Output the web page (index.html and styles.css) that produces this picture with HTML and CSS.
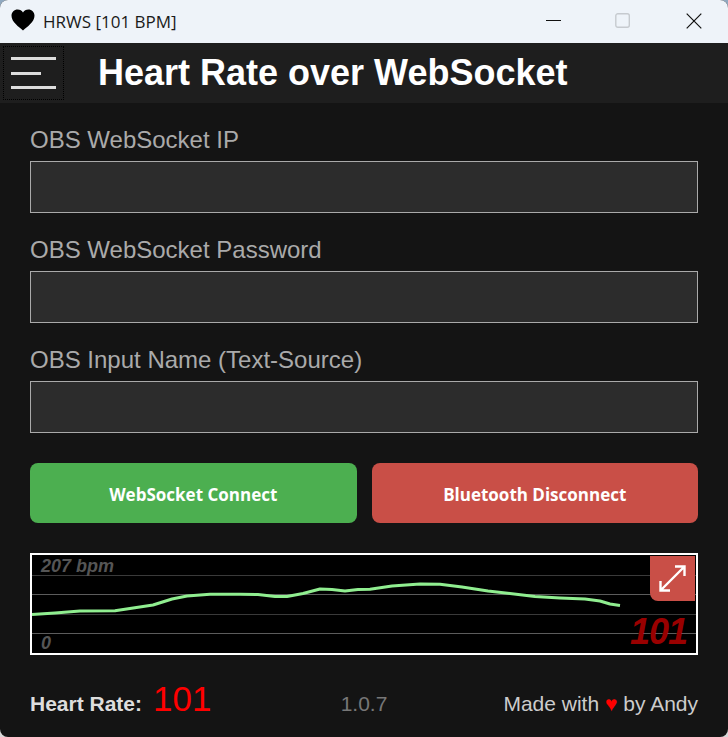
FILE: index.html
```html
<!DOCTYPE html>
<html lang="en">
<head>
  <meta charset="UTF-8" />
  <title>HRWS [101 BPM]</title>
  <link rel="stylesheet" href="styles.css">
</head>
<body>
  <div class="window">
    <!-- Title bar -->
    <div class="titlebar">
      <svg class="app-icon" width="24" height="22" viewBox="0 0 24 22">
        <path d="M12 21.5 C8 18 0.5 13 0.5 6.8 C0.5 3 3.3 0.5 6.6 0.5 C9 0.5 11 1.8 12 3.6 C13 1.8 15 0.5 17.4 0.5 C20.7 0.5 23.5 3 23.5 6.8 C23.5 13 16 18 12 21.5 Z" fill="#000"/>
      </svg>
      <span class="title-text">HRWS [101 BPM]</span>
      <div class="win-controls">
        <svg class="win-btn" width="16" height="16" viewBox="0 0 16 16"><path d="M2 7.5 H17" stroke="#111" stroke-width="1"/></svg>
        <svg class="win-btn" width="16" height="16" viewBox="0 0 16 16"><rect x="0.8" y="0.8" width="13.5" height="13.5" rx="2" fill="none" stroke="#c6cacf" stroke-width="1.4"/></svg>
        <svg class="win-btn" width="16" height="16" viewBox="0 0 16 16"><path d="M0.7 0.7 L15.3 15.3 M15.3 0.7 L0.7 15.3" stroke="#111" stroke-width="1.2"/></svg>
      </div>
    </div>

    <!-- App header -->
    <div class="header">
      <div class="menu-btn">
        <span class="bar"></span>
        <span class="bar bar-short"></span>
        <span class="bar"></span>
      </div>
      <h1>Heart Rate over WebSocket</h1>
    </div>

    <div class="content">
      <div class="field">
        <label>OBS WebSocket IP</label>
        <input type="text">
      </div>
      <div class="field">
        <label>OBS WebSocket Password</label>
        <input type="text">
      </div>
      <div class="field">
        <label>OBS Input Name (Text-Source)</label>
        <input type="text">
      </div>

      <div class="buttons">
        <button class="btn-green">WebSocket Connect</button>
        <button class="btn-red">Bluetooth Disconnect</button>
      </div>

      <!-- Heart rate graph -->
      <div class="graph">
        <svg class="graph-svg" width="664" height="98" viewBox="32 555 664 98">
          <path d="M32 575.5 H696 M32 614.5 H696" stroke="#3a3a3a" stroke-width="1"/>
          <path d="M32 594.5 H696 M32 633.5 H696" stroke="#5c5c5c" stroke-width="1"/>
          <path d="M32 614.5 L55 613 L80 611 L115 610.7 L153 605 L172 599 L187 596 L210 594.3 L240 594.2 L258 594.5 L275 596.5 L287 596.5 L303 593.5 L320 589 L332 589.5 L345 591 L358 589.5 L370 589.3 L392 586 L420 584 L440 584.3 L462 587 L488 591 L510 593.5 L535 596.5 L560 598 L585 599 L600 601 L610 604 L620 605.5" fill="none" stroke="#90ee90" stroke-width="3" stroke-linejoin="round"/>
        </svg>
        <span class="graph-max">207 bpm</span>
        <span class="graph-min">0</span>
        <span class="graph-now">101</span>
        <div class="expand-btn">
          <svg width="29" height="29" viewBox="0 0 29 29">
            <path d="M2.5 26.5 L26.5 2.5 M17 2.5 H26.5 V12 M2.5 17 V26.5 H12" fill="none" stroke="#fff" stroke-width="2.4"/>
          </svg>
        </div>
      </div>

      <div class="footer">
        <div class="rate"><b>Heart Rate:</b><span class="rate-value">101</span></div>
        <div class="version">1.0.7</div>
        <div class="credit">Made with <span class="love">♥</span> by Andy</div>
      </div>
    </div>
  </div>
</body>
</html>
```

FILE: styles.css
```css
/* Global */
html, body {
  margin: 0;
  padding: 0;
  height: 100%;
  background: linear-gradient(#8fa8c0, #8fa8c0 50%, #d8d8d8 50%);
  overflow: hidden;
}
body {
  font-family: 'Liberation Sans', Arial, sans-serif;
}
.window {
  height: 737px;
  border-radius: 8px;
  overflow: hidden;
  background: #141414;
  display: flex;
  flex-direction: column;
}
/* Title bar */
.titlebar {
  height: 43px;
  flex: none;
  background: #eef3f9;
  display: flex;
  align-items: center;
  padding: 0 0 1px 11px;
  box-sizing: border-box;
}
.app-icon {
  margin: 0 8px 2px 0;
}
.title-text {
  font-family: 'Open Sans', sans-serif;
  font-size: 17px;
  color: #1a1a1a;
}
.win-controls {
  margin-left: auto;
  display: flex;
  gap: 55px;
  padding-right: 26px;
}
.win-btn {
  display: block;
  overflow: visible;
}
/* Header */
.header {
  height: 60px;
  flex: none;
  background: #1e1e1e;
  display: flex;
  align-items: center;
  padding-left: 3px;
  box-sizing: border-box;
}
.menu-btn {
  width: 61px;
  height: 54px;
  box-sizing: border-box;
  border: 1px dotted #000;
  padding: 10px 7px;
  display: flex;
  flex-direction: column;
  justify-content: space-between;
  align-items: flex-start;
  flex: none;
}
.bar {
  display: block;
  width: 45px;
  height: 3px;
  background: #ddd;
}
.bar-short {
  width: 30px;
}
.header h1 {
  margin: 0 0 0 34px;
  font-size: 36px;
  font-weight: bold;
  color: #fff;
}
/* Form */
.content {
  padding: 22px 30px 0;
  flex: 1;
  display: flex;
  flex-direction: column;
}
.field {
  height: 110px;
  flex: none;
}
.field label {
  display: block;
  font-size: 24px;
  line-height: 30px;
  color: #aaa;
  margin: 0 0 6px;
}
.field input {
  display: block;
  width: 100%;
  height: 52px;
  box-sizing: border-box;
  border: 1px solid #aaa;
  background: #2c2c2c;
  padding: 0 10px;
}
.buttons {
  display: flex;
  gap: 15px;
  margin-top: 8px;
}
.buttons button {
  flex: 1;
  height: 60px;
  border: none;
  border-radius: 8px;
  padding: 2px 0 0;
  color: #fff;
  font-family: 'Open Sans', sans-serif;
  font-size: 17px;
  font-weight: bold;
}
.btn-green {
  background: #4caf50;
}
.btn-red {
  background: #c94f47;
}
/* Graph */
.graph {
  position: relative;
  height: 102px;
  margin-top: 30px;
  box-sizing: border-box;
  border: 2px solid #fff;
  background: #000;
}
.graph-svg {
  display: block;
}
.graph-max, .graph-min {
  position: absolute;
  left: 9px;
  font-size: 18px;
  font-weight: bold;
  font-style: italic;
  color: #555;
}
.graph-max {
  top: 1px;
}
.graph-min {
  bottom: -1px;
}
.graph-now {
  position: absolute;
  right: 9px;
  bottom: 0;
  font-size: 36px;
  letter-spacing: -1px;
  font-weight: bold;
  font-style: italic;
  color: #900;
}
.expand-btn {
  position: absolute;
  top: 1px;
  right: 1px;
  width: 45px;
  height: 45px;
  background: #c94f47;
  border-bottom-left-radius: 8px;
  display: flex;
  align-items: center;
  justify-content: center;
}
.expand-btn svg {
  display: block;
}
/* Footer */
.footer {
  display: flex;
  align-items: baseline;
  justify-content: space-between;
  margin-top: 24px;
  height: 46px;
  font-size: 21px;
}
.rate {
  display: flex;
  align-items: baseline;
  width: 200px;
  color: #ddd;
}
.rate-value {
  font-size: 35px;
  color: #f00;
  margin-left: 11px;
}
.version {
  color: #777;
}
.credit {
  color: #ccc;
  width: 200px;
  text-align: right;
  white-space: nowrap;
}
.love {
  color: #f00;
}
```
